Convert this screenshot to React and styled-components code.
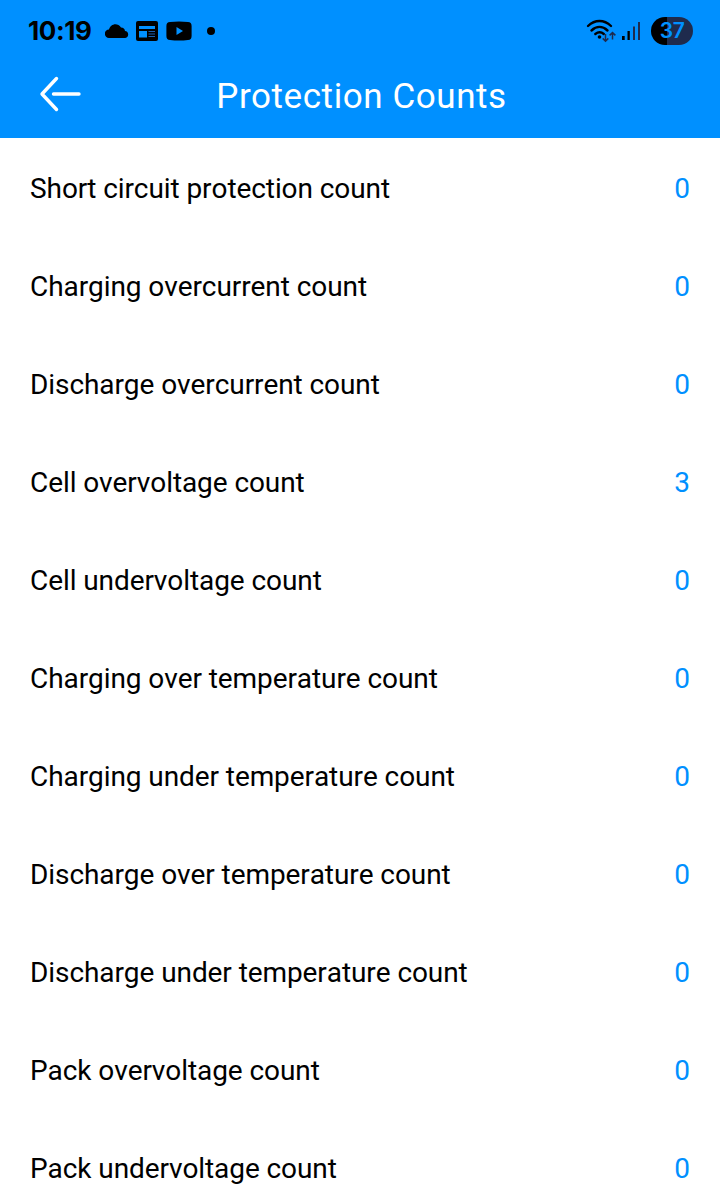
import React from 'react';
import styled, { createGlobalStyle, css } from 'styled-components';

const colors = {
  blue: '#0090ff',
  ink: '#000',
  navy: '#1f2b4d',
  white: '#fff',
};

const GlobalStyle = createGlobalStyle`
  * {
    box-sizing: border-box;
  }
  body {
    margin: 0;
    background: ${colors.white};
    font-family: Roboto, 'Liberation Sans', sans-serif;
  }
`;

const Screen = styled.div`
  width: 720px;
  height: 1194px;
  overflow: hidden;
  background: ${colors.white};
`;

const Header = styled.header`
  height: 138px;
  background: ${colors.blue};
`;

const StatusBar = styled.div`
  display: flex;
  align-items: center;
  justify-content: space-between;
  height: 62px;
  padding: 0 27px 0 28px;
`;

const StatusGroup = styled.div`
  display: flex;
  align-items: center;
  svg {
    display: block;
  }
`;

const Clock = styled.span`
  width: 77px;
  font-family: Inter, Roboto, sans-serif;
  font-size: 26px;
  font-weight: 700;
  line-height: 30px;
  letter-spacing: -0.4px;
  white-space: nowrap;
  color: ${colors.ink};
`;

const Battery = styled.div`
  width: 42px;
  height: 28px;
  margin-left: 10px;
  border-radius: 14px;
  background: linear-gradient(90deg, ${colors.ink} 37%, ${colors.navy} 37%);
  color: ${colors.blue};
  font-family: Inter, Roboto, sans-serif;
  font-size: 21px;
  font-weight: 600;
  line-height: 27px;
  letter-spacing: -0.5px;
  text-align: center;
`;

const NavBar = styled.div`
  display: grid;
  grid-template-columns: 120px 1fr 117px;
  align-items: center;
  height: 68px;
`;

const BackButton = styled.button`
  display: flex;
  padding: 0 0 4px 38px;
  border: 0;
  background: none;
`;

const Title = styled.h1`
  margin: 0;
  padding-top: 2px;
  font-size: 35px;
  font-weight: 400;
  line-height: 42px;
  letter-spacing: 0.57px;
  text-align: center;
  color: ${colors.white};
`;

const List = styled.ul`
  margin: 0;
  padding: 2px 0 0;
  list-style: none;
`;

const Row = styled.li`
  display: flex;
  align-items: center;
  justify-content: space-between;
  height: 98px;
  padding: 0 30px;
`;

const Text = styled.span`
  ${({ value }) => css`
    color: ${value ? colors.blue : colors.ink};
    font-size: 28px;
    font-kerning: none;
    line-height: 34px;
    letter-spacing: -0.08px;
    white-space: nowrap;
  `}
`;

const CloudIcon = () => (
  <svg width="24" height="16" viewBox="0 0 24 16">
    <path
      d="M4 15A4.200 4.200 0 0 1 4 6.600C5 1 12.500-1.200 16 4.400q3.600.1 4 3.500A3.600 3.600 0 0 1 20.300 15z"
      fill={colors.ink}
    />
  </svg>
);

const NewsIcon = () => (
  <svg width="22" height="20" viewBox="0 0 22 20">
    <rect width="22" height="20" rx="2" fill={colors.ink} />
    <path d="M3 5h16v3H3zM3 10h8v6.500H3z" fill={colors.blue} />
    <path d="M12.500 10.500h6.500M12.500 13h6.500M12.500 15.500h6.500" stroke="#1c5fae" strokeWidth="1" />
  </svg>
);

const VideoIcon = () => (
  <svg width="26" height="20" viewBox="0 0 26 20">
    <path
      d="M4 1Q13-.2 22 1q3.600.2 3.600 4v10q0 3.800-3.600 4-9 1.200-18 0-3.600-.2-3.600-4V5Q.4 1.200 4 1z"
      fill={colors.ink}
    />
    <path d="M10.500 6l6.500 4-6.500 4z" fill={colors.blue} />
  </svg>
);

const Dot = styled.span`
  width: 8px;
  height: 8px;
  margin-left: 15px;
  border-radius: 50%;
  background: ${colors.ink};
`;

const Slot = styled.span`
  margin-left: ${({ gap }) => gap}px;
`;

const WifiIcon = () => (
  <svg width="32" height="24" viewBox="0 0 32 24" fill="none">
    <g stroke={colors.ink} strokeWidth="2.400" strokeLinecap="round">
      <path d="M2 7C9 .4 18 .4 25 7" />
      <path d="M5.500 11.500c5-4.600 11-4.600 16 0" />
      <path d="M9.300 15c3-2.400 5.800-2.400 8.500 0" />
    </g>
    <circle cx="13.500" cy="18" r="1.800" fill={colors.ink} />
    <path
      d="M19.500 15v7m-2.800-2.600l2.800 2.800 2.800-2.800M26.500 20.500v-7m-2.900 2.900l2.900-2.900 2.900 2.900"
      stroke={colors.navy}
      strokeWidth="1.500"
    />
  </svg>
);

const SignalIcon = () => (
  <svg width="19" height="18" viewBox="0 0 19 18">
    <path d="M0 14h2.700v4H0zM5.500 9h2.300v9H5.500z" fill={colors.ink} />
    <path d="M11 4.500h2V18h-2zM16 0h2v18h-2z" fill={colors.navy} />
  </svg>
);

const BackIcon = () => (
  <svg width="44" height="38" viewBox="0 0 44 38" fill="none">
    <path
      d="M18.500 3.500L4 19l14.500 15.500M15.500 19H41"
      stroke={colors.white}
      strokeWidth="3.400"
      strokeLinecap="round"
      strokeLinejoin="round"
    />
  </svg>
);

const counts = [
  ['Short circuit protection count', 0],
  ['Charging overcurrent count', 0],
  ['Discharge overcurrent count', 0],
  ['Cell overvoltage count', 3],
  ['Cell undervoltage count', 0],
  ['Charging over temperature count', 0],
  ['Charging under temperature count', 0],
  ['Discharge over temperature count', 0],
  ['Discharge under temperature count', 0],
  ['Pack overvoltage count', 0],
  ['Pack undervoltage count', 0],
];

const App = () => (
  <>
    <GlobalStyle />
    <Screen>
      <Header>
        <StatusBar>
          <StatusGroup>
            <Clock>10:19</Clock>
            <CloudIcon />
            <Slot gap={7}><NewsIcon /></Slot>
            <Slot gap={8}><VideoIcon /></Slot>
            <Dot />
          </StatusGroup>
          <StatusGroup>
            <WifiIcon />
            <Slot gap={4}><SignalIcon /></Slot>
            <Battery>37</Battery>
          </StatusGroup>
        </StatusBar>
        <NavBar>
          <BackButton aria-label="Back">
            <BackIcon />
          </BackButton>
          <Title>Protection Counts</Title>
        </NavBar>
      </Header>
      <List>
        {counts.map(([label, count]) => (
          <Row key={label}>
            <Text>{label}</Text>
            <Text value="true">{count}</Text>
          </Row>
        ))}
      </List>
    </Screen>
  </>
);

export default App;
